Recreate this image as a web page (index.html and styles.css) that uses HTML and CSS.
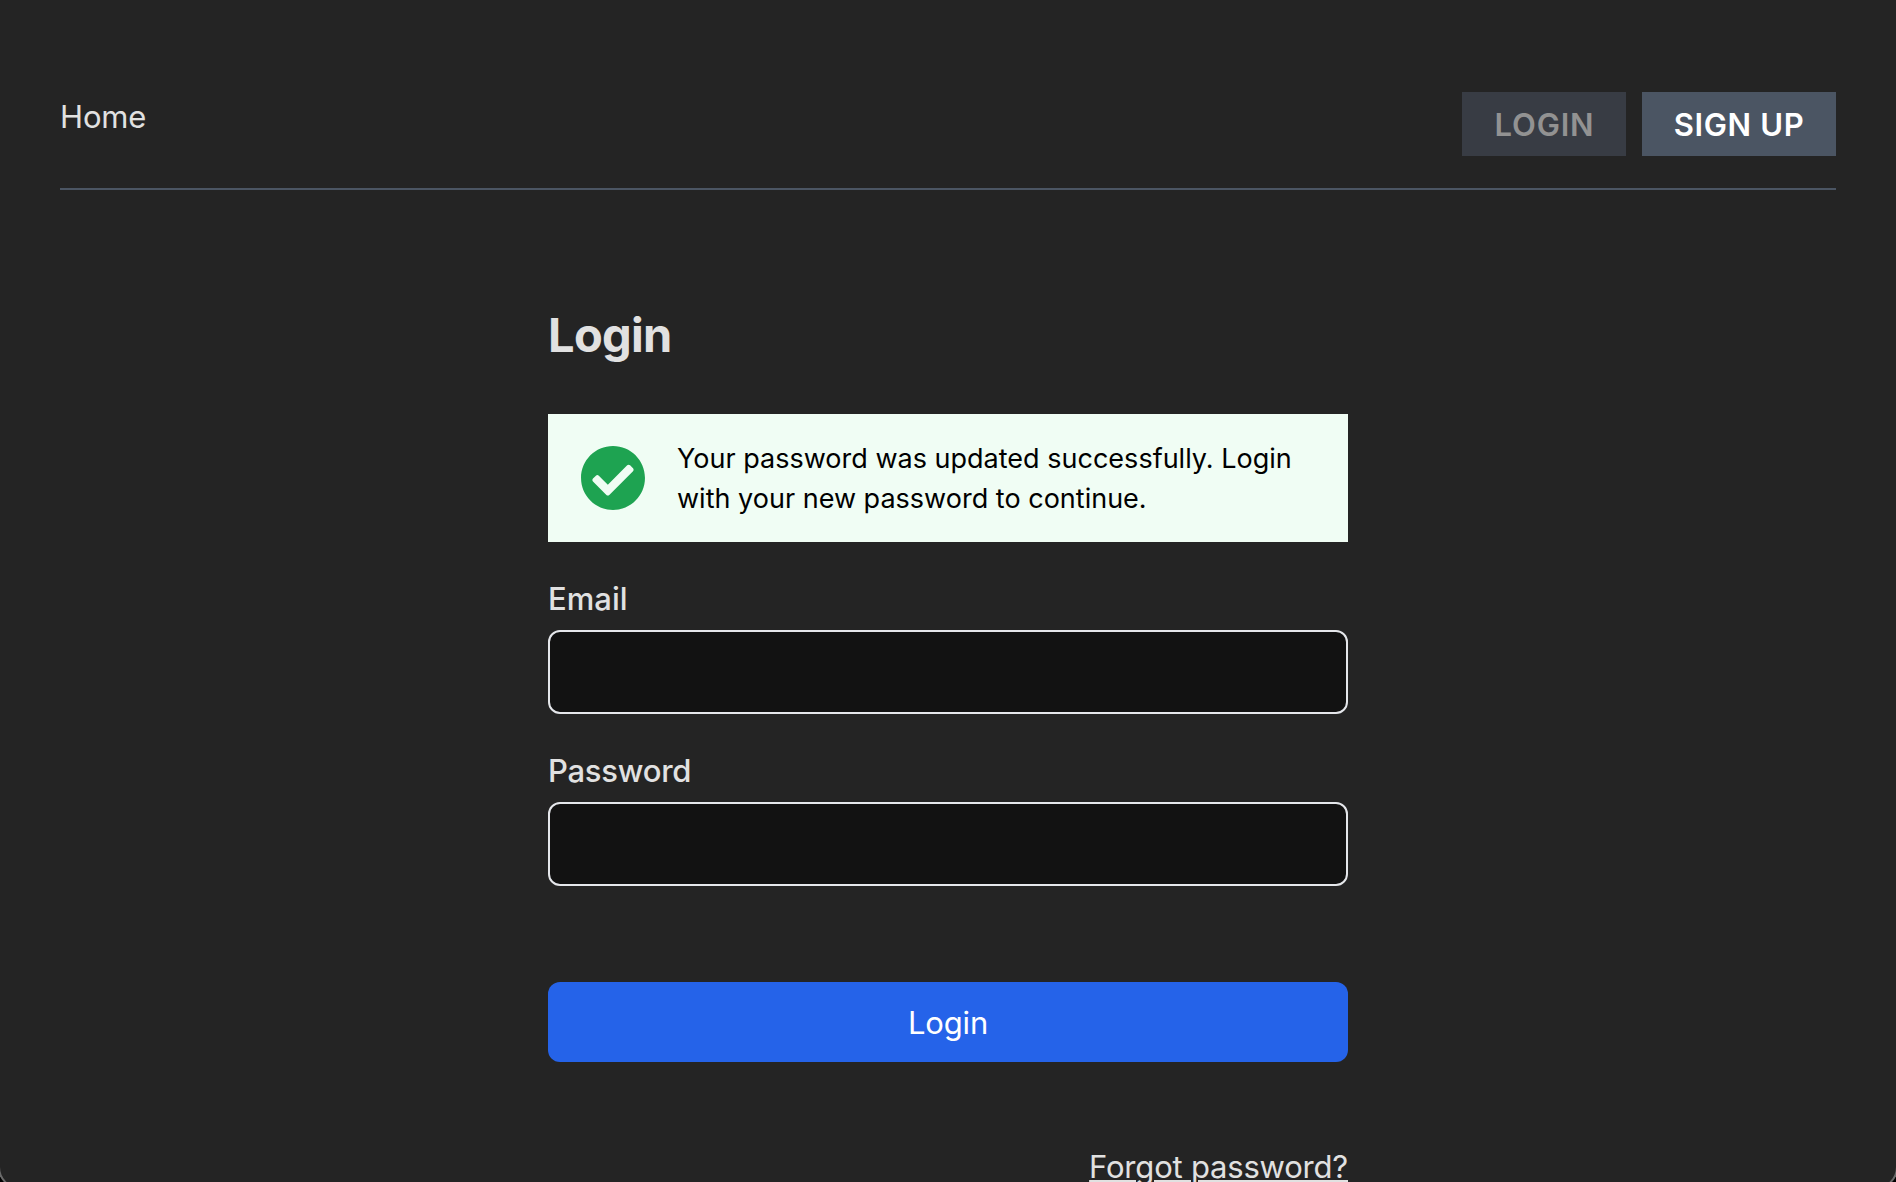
FILE: index.html
```
<!DOCTYPE html>
<html lang="en">
<head>
  <meta charset="utf-8">
  <title>Login</title>
  <link rel="stylesheet" href="styles.css">
</head>
<body>
  <div class="window">
    <header class="header">
      <a class="home" href="#">Home</a>
      <nav class="nav">
        <button class="nav-button nav-login" disabled>LOGIN</button>
        <button class="nav-button nav-signup">SIGN UP</button>
      </nav>
    </header>
    <main class="main">
      <h1 class="title">Login</h1>
      <div class="alert">
        <svg class="alert-icon" viewBox="0 0 512 512" aria-hidden="true"><path fill="currentColor" d="M504 256c0 136.967-111.033 248-248 248S8 392.967 8 256 119.033 8 256 8s248 111.033 248 248zM227.314 387.314l184-184c6.248-6.248 6.248-16.379 0-22.627l-22.627-22.627c-6.248-6.249-16.379-6.249-22.628 0L216 308.118l-70.059-70.059c-6.248-6.248-16.379-6.248-22.628 0l-22.627 22.627c-6.248 6.248-6.248 16.379 0 22.627l104 104c6.249 6.249 16.379 6.249 22.628.001z"/></svg>
        <p class="alert-text">Your password was updated successfully. Login with your new password to continue.</p>
      </div>
      <form class="form">
        <div class="field">
          <label class="label" for="email">Email</label>
          <input class="input" id="email" type="email">
        </div>
        <div class="field">
          <label class="label label-password" for="password">Password</label>
          <input class="input" id="password" type="password">
        </div>
        <button class="submit" type="button">Login</button>
      </form>
      <a class="forgot" href="#">Forgot password?</a>
    </main>
  </div>
</body>
</html>
```
FILE: styles.css
```
* {
  box-sizing: border-box;
}

html {
  background: #000;
}

body {
  margin: 0;
  height: 100vh;
  overflow: hidden;
  font-family: Inter, "Liberation Sans", sans-serif;
  font-size: 31px;
  line-height: 49px;
  color: #e1e1e1;
}

.window {
  height: calc(100vh + 5px);
  overflow: hidden;
  padding: 92px 60px 0;
  background: #242424;
  border-radius: 0 0 20px 20px;
  box-shadow: 0 0 0 2px #6a6a6a;
}

.header {
  display: flex;
  justify-content: space-between;
  align-items: flex-start;
  height: 98px;
  border-bottom: 2px solid #4b5563;
}

.home {
  color: inherit;
  text-decoration: none;
  letter-spacing: -0.15px;
}

.nav {
  display: flex;
  gap: 16px;
}

.nav-button {
  height: 64px;
  padding: 1px 0 0;
  border: 0;
  background: #4b5563;
  color: #fff;
  font: 600 31px/49px Inter, "Liberation Sans", sans-serif;
}

.nav-login {
  width: 164px;
  padding-left: 1px;
  background: #383c44;
  color: #929292;
  letter-spacing: 0.8px;
}

.nav-signup {
  width: 194px;
  letter-spacing: 0.65px;
}

.main {
  display: flex;
  flex-direction: column;
  width: 800px;
  margin: 116px auto 0;
}

.title {
  margin: 0 0 51px;
  font-size: 47px;
  line-height: 57px;
  font-weight: 700;
  letter-spacing: -0.7px;
}

.alert {
  display: flex;
  align-items: center;
  gap: 31px;
  height: 128px;
  padding: 0 32px;
  background: #f0fdf4;
  color: #000;
}

.alert-icon {
  flex: none;
  width: 66px;
  height: 66px;
  color: #1ea351;
}

.alert-text {
  margin: 2px 0 0;
  font-size: 27px;
  line-height: 40px;
  letter-spacing: 0.01px;
}

.form {
  display: flex;
  flex-direction: column;
}

.field {
  display: flex;
  flex-direction: column;
  gap: 7px;
  margin-top: 32px;
}

.label {
  font-weight: 500;
  letter-spacing: 0.05px;
}

.label-password {
  letter-spacing: -0.25px;
}

.input {
  height: 84px;
  padding: 16px;
  border: 2px solid #e5e7eb;
  border-radius: 12px;
  background: #121212;
  color: inherit;
  font: inherit;
}

.submit {
  height: 80px;
  margin-top: 96px;
  padding: 1px 0 0;
  border: 0;
  border-radius: 12px;
  background: #2563e9;
  color: #fff;
  font: inherit;
  letter-spacing: -0.16px;
}

.forgot {
  align-self: flex-end;
  margin-top: 80px;
  color: inherit;
  letter-spacing: -0.2px;
  text-decoration: underline;
  text-decoration-thickness: 2px;
  text-underline-offset: 2px;
}
```
